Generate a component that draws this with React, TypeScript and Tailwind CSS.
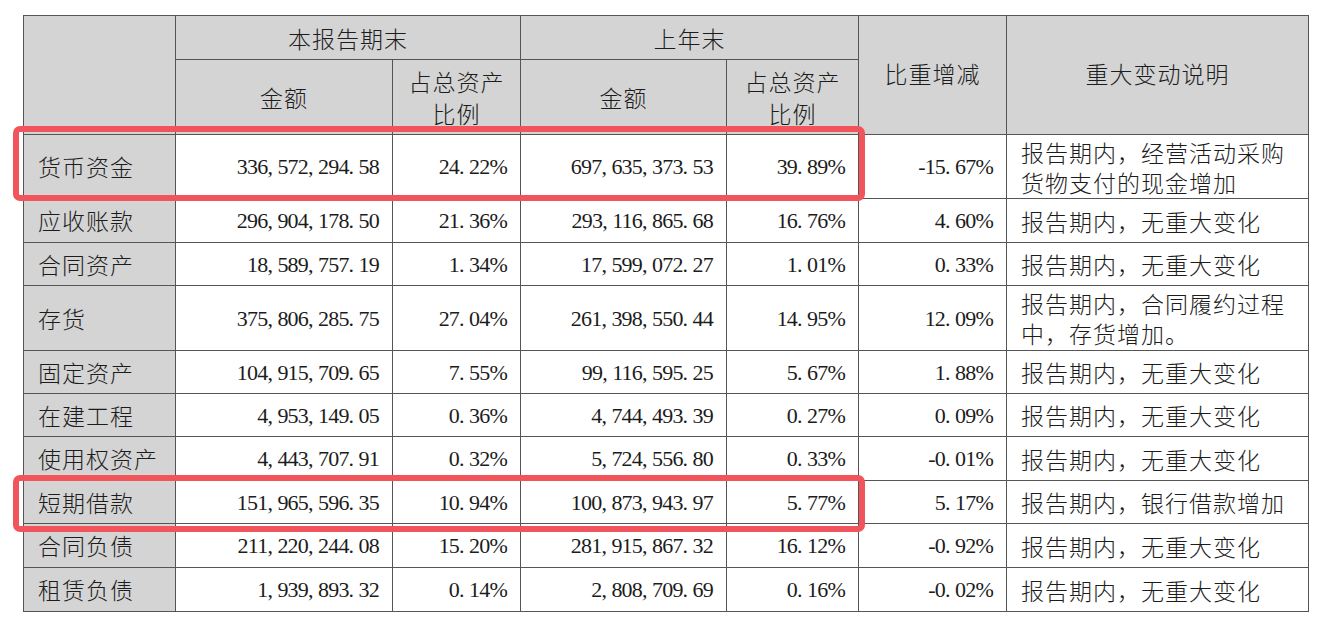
import React from 'react';

type Row = {
  name: string;
  cur: string;
  curPct: string;
  prev: string;
  prevPct: string;
  diff: string;
  note: string[];
  h: string;
};

const ROWS: Row[] = [
  { name: '货币资金', cur: '336,572,294.58', curPct: '24.22%', prev: '697,635,373.53', prevPct: '39.89%', diff: '-15.67%', note: ['报告期内，经营活动采购', '货物支付的现金增加'], h: 'h-[64px]' },
  { name: '应收账款', cur: '296,904,178.50', curPct: '21.36%', prev: '293,116,865.68', prevPct: '16.76%', diff: '4.60%', note: ['报告期内，无重大变化'], h: 'h-[44px]' },
  { name: '合同资产', cur: '18,589,757.19', curPct: '1.34%', prev: '17,599,072.27', prevPct: '1.01%', diff: '0.33%', note: ['报告期内，无重大变化'], h: 'h-[43px]' },
  { name: '存货', cur: '375,806,285.75', curPct: '27.04%', prev: '261,398,550.44', prevPct: '14.95%', diff: '12.09%', note: ['报告期内，合同履约过程', '中，存货增加。'], h: 'h-[65px]' },
  { name: '固定资产', cur: '104,915,709.65', curPct: '7.55%', prev: '99,116,595.25', prevPct: '5.67%', diff: '1.88%', note: ['报告期内，无重大变化'], h: 'h-[43px]' },
  { name: '在建工程', cur: '4,953,149.05', curPct: '0.36%', prev: '4,744,493.39', prevPct: '0.27%', diff: '0.09%', note: ['报告期内，无重大变化'], h: 'h-[43px]' },
  { name: '使用权资产', cur: '4,443,707.91', curPct: '0.32%', prev: '5,724,556.80', prevPct: '0.33%', diff: '-0.01%', note: ['报告期内，无重大变化'], h: 'h-[44px]' },
  { name: '短期借款', cur: '151,965,596.35', curPct: '10.94%', prev: '100,873,943.97', prevPct: '5.77%', diff: '5.17%', note: ['报告期内，银行借款增加'], h: 'h-[43px]' },
  { name: '合同负债', cur: '211,220,244.08', curPct: '15.20%', prev: '281,915,867.32', prevPct: '16.12%', diff: '-0.92%', note: ['报告期内，无重大变化'], h: 'h-[44px]' },
  { name: '租赁负债', cur: '1,939,893.32', curPct: '0.14%', prev: '2,808,709.69', prevPct: '0.16%', diff: '-0.02%', note: ['报告期内，无重大变化'], h: 'h-[44px]' },
];

const cjk = "font-['Noto_Sans_CJK_SC',sans-serif] font-light text-[23px] tracking-[1px]";

// half-width punctuation like the song-ti original
const Num = ({ v }: { v: string }) => (
  <span className="font-['Liberation_Serif',serif] text-[22px] tracking-[-0.8px]">
    {v.split('').map((c, i) =>
      c === ',' || c === '.' ? (
        <span key={i} className="inline-block w-[10px] text-left">{c}</span>
      ) : (
        <React.Fragment key={i}>{c}</React.Fragment>
      )
    )}
  </span>
);

const th = `border border-[#555] bg-[#d4d4d4] text-center align-middle leading-[32px] ${cjk}`;
const td = 'border border-[#555] align-middle';

export default function App() {
  return (
    <div className="relative min-h-screen bg-white pt-[15px] pl-[23px] text-[#1c1c1c]">
      <table className="w-[1286px] table-fixed border-collapse">
        <colgroup>
          <col className="w-[152px]" />
          <col className="w-[217px]" />
          <col className="w-[128px]" />
          <col className="w-[206px]" />
          <col className="w-[132px]" />
          <col className="w-[148px]" />
          <col className="w-[302px]" />
        </colgroup>
        <thead>
          <tr className="h-[44px]">
            <th rowSpan={2} className={th}></th>
            <th colSpan={2} className={th}>本报告期末</th>
            <th colSpan={2} className={th}>上年末</th>
            <th rowSpan={2} className={`${th} pb-[4px]`}>比重增减</th>
            <th rowSpan={2} className={`${th} pb-[4px]`}>重大变动说明</th>
          </tr>
          <tr className="h-[75px]">
            <th className={th}>金额</th>
            <th className={th}>占总资产<br />比例</th>
            <th className={th}>金额</th>
            <th className={th}>占总资产<br />比例</th>
          </tr>
        </thead>
        <tbody>
          {ROWS.map((r) => (
            <tr key={r.name} className={r.h}>
              <td className={`${td} ${cjk} bg-[#d4d4d4] pl-[14px]`}>{r.name}</td>
              <td className={`${td} text-right pr-[13px]`}><Num v={r.cur} /></td>
              <td className={`${td} text-right pr-[13px]`}><Num v={r.curPct} /></td>
              <td className={`${td} text-right pr-[13px]`}><Num v={r.prev} /></td>
              <td className={`${td} text-right pr-[13px]`}><Num v={r.prevPct} /></td>
              <td className={`${td} text-right pr-[13px]`}><Num v={r.diff} /></td>
              <td className={`${td} ${cjk} leading-[30px] pl-[14px] pr-2`}>
                {r.note.map((n, i) => (
                  <div key={i}>{n}</div>
                ))}
              </td>
            </tr>
          ))}
        </tbody>
      </table>

      {/* highlight boxes */}
      <div className="pointer-events-none absolute left-[13px] top-[126px] h-[75px] w-[852px] rounded-[7px] border-[6px] border-[#f2545b]" />
      <div className="pointer-events-none absolute left-[13px] top-[475px] h-[57px] w-[852px] rounded-[7px] border-[6px] border-[#f2545b]" />
    </div>
  );
}
